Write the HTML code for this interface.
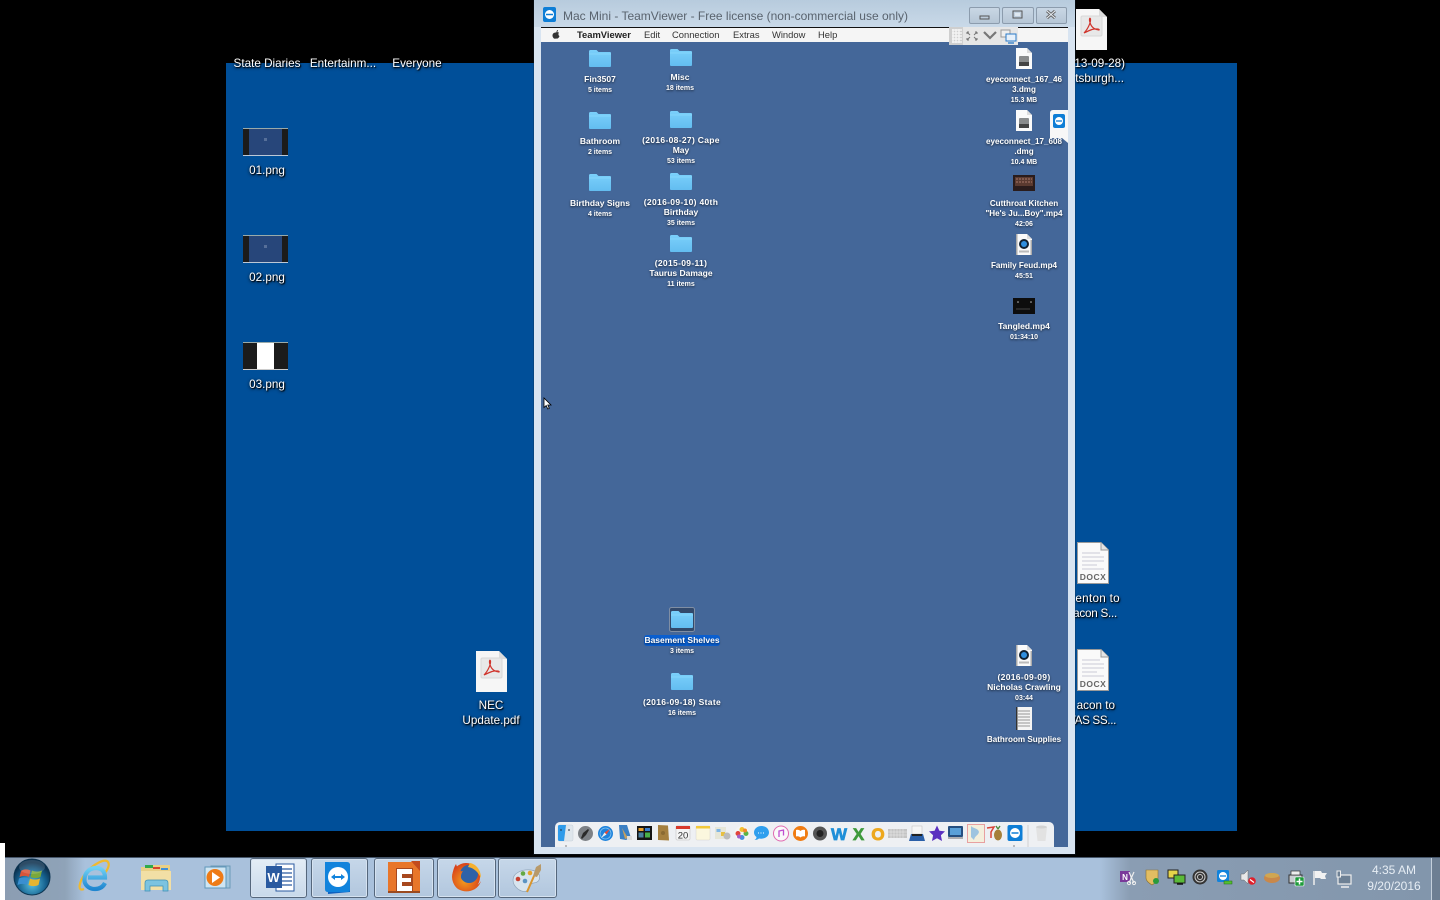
<!DOCTYPE html>
<html><head><meta charset="utf-8"><title>Mac Mini - TeamViewer</title>
<style>
html,body{margin:0;padding:0;width:1440px;height:900px;overflow:hidden;background:#000}
div{position:absolute}
svg{position:absolute;left:0;top:0;overflow:visible}
.d{font:11.7px/15px "Liberation Sans",sans-serif;color:#fff;text-shadow:1px 1px 1px #000,0 1px 3px #000;white-space:nowrap}
.c{width:120px;margin-left:-60px;text-align:center}
.m{width:100px;margin-left:-50px;text-align:center;font:bold 8.5px/10px "Liberation Sans",sans-serif;color:#fff;text-shadow:0 1px 2px rgba(0,0,0,.65);white-space:nowrap}
.s{font-size:7px}
.n{letter-spacing:.32px}
.e{font-size:8.1px}
.mn{font:9.4px/14px "Liberation Sans",sans-serif;color:#333;top:28px;white-space:nowrap}
.tb{top:858px;height:38px;background:linear-gradient(#c6d7e9,#b2c7de);border:1px solid #55677c;border-radius:3px;box-shadow:inset 0 0 0 1px #d5e2f0}
</style></head><body>
<svg width="0" height="0" style="position:absolute"><defs>
<linearGradient id="fg" x1="0" y1="0" x2="0" y2="1"><stop offset="0" stop-color="#7bd0fb"/><stop offset="1" stop-color="#63bdf0"/></linearGradient>
<linearGradient id="ieg" x1="0" y1="0" x2="0" y2="1"><stop offset="0" stop-color="#6fd0f4"/><stop offset="1" stop-color="#1f86d0"/></linearGradient>
<radialGradient id="orb" cx=".5" cy=".7" r=".6"><stop offset="0" stop-color="#58c0e0"/><stop offset=".65" stop-color="#15608e"/><stop offset="1" stop-color="#0b2f4d"/></radialGradient>
<radialGradient id="fx" cx=".45" cy=".6" r=".6"><stop offset="0" stop-color="#f6a21e"/><stop offset="1" stop-color="#d8401a"/></radialGradient>
<symbol id="folder" viewBox="0 0 22 17" width="22" height="17"><path d="M0 1.5Q0 0 1.5 0H7.5L9.5 2H21Q22 2 22 3V16Q22 17 21 17H1Q0 17 0 16Z" fill="url(#fg)"/><path d="M0 4H22" stroke="#8bd8fd" stroke-width=".7"/></symbol>
<symbol id="doc" viewBox="0 0 16 21" width="16" height="21"><path d="M0 0H11L16 5V21H0Z" fill="#fafafa"/><path d="M11 0V5H16" fill="#ddd"/></symbol>
<symbol id="dmg" viewBox="0 0 16 21" width="16" height="21"><use href="#doc"/><rect x="3" y="8" width="10" height="10" rx="1" fill="#8a8c8d"/><rect x="3" y="14" width="10" height="4" fill="#444"/></symbol>
<symbol id="mov" viewBox="0 0 16 21" width="16" height="21"><use href="#doc"/><path d="M0 0H1.500V21H0ZM14.500 6H16V21H14.500Z" fill="#aaa"/><circle cx="8" cy="10" r="5" fill="#123"/><circle cx="8" cy="10" r="3" fill="#2f8fe0"/><rect x="3" y="16.500" width="10" height="2" fill="#bbb"/></symbol>
<symbol id="docx" viewBox="0 0 32 42" width="32" height="42"><path d="M.5.500H24L31.500 8V41.500H.5Z" fill="#fafafa" stroke="#9a9a9a"/><path d="M24 .5V8H31.500" fill="#e4e4e4" stroke="#9a9a9a"/><path d="M5 11H23M5 15H27M5 19H27M5 23H20M5 27H27" stroke="#c9c9d6"/><text x="16" y="38" text-anchor="middle" font-family="Liberation Sans" font-weight="bold" font-size="8.500" letter-spacing=".5" fill="#666">DOCX</text></symbol>
<symbol id="pdf" viewBox="0 0 31 41" width="31" height="41"><path d="M0 0H23L31 8V41H0Z" fill="#f6f6f6"/><path d="M23 0V8H31" fill="#dcdcdc"/><rect x="5" y="7" width="21" height="20" rx="1.500" fill="#e8e8e8" stroke="#d8d8d8"/><path d="M8 24C12 20 15 13 14.500 10C14 8 12.500 10 14.500 15C16 19 20 21 23 21C24 20 20 19.500 16 20.500C13 21.500 10 23 8 24Z" fill="none" stroke="#d0342c" stroke-width="1.200"/></symbol>
</defs></svg>

<!-- Windows desktop -->
<div style="left:226px;top:63px;width:1011px;height:768px;background:#004f99"></div>
<div style="left:0;top:843px;width:5px;height:57px;background:#fff"></div>

<div class="d c" style="left:267px;top:56px">State Diaries</div>
<div class="d c" style="left:343px;top:56px">Entertainm...</div>
<div class="d c" style="left:417px;top:56px">Everyone</div>
<div class="d c" style="left:267px;top:163px">01.png</div>
<div class="d c" style="left:267px;top:270px">02.png</div>
<div class="d c" style="left:267px;top:377px">03.png</div>
<div class="d c" style="left:491px;top:698px">NEC<br>Update.pdf</div>
<div class="d" style="right:315px;top:56px">13-09-28)</div>
<div class="d" style="right:316px;top:71px">tsburgh...</div>
<div class="d" style="right:320px;top:591px;letter-spacing:.3px">enton to</div>
<div class="d" style="right:323px;top:606px;letter-spacing:-.25px">acon S...</div>
<div class="d" style="right:325px;top:698px">acon to</div>
<div class="d" style="right:324px;top:713px;letter-spacing:-.35px">VAS SS...</div>

<svg width="1440" height="900">
 <g>
  <rect x="243" y="128" width="45" height="28" fill="#1b1b1b"/><rect x="249" y="129" width="33" height="26" fill="#27467a"/><rect x="243" y="128" width="45" height="1" fill="#9aa"/><rect x="243" y="155" width="45" height="1" fill="#bcc8d6"/><rect x="264" y="138" width="3" height="3" fill="#566f99"/>
  <rect x="243" y="235" width="45" height="28" fill="#1b1b1b"/><rect x="249" y="236" width="33" height="26" fill="#27467a"/><rect x="243" y="235" width="45" height="1" fill="#9aa"/><rect x="243" y="262" width="45" height="1" fill="#bcc8d6"/><rect x="264" y="245" width="3" height="3" fill="#566f99"/>
  <rect x="243" y="342" width="45" height="28" fill="#1b1b1b"/><rect x="257" y="343" width="17" height="26" fill="#fff"/><rect x="243" y="342" width="45" height="1" fill="#9aa"/><rect x="243" y="369" width="45" height="1" fill="#ccc"/>
 </g>
 <use href="#pdf" x="476" y="651"/>
 <use href="#pdf" x="1076" y="9"/>
 <use href="#docx" x="1077" y="542"/>
 <use href="#docx" x="1077" y="649"/>
</svg>

<!-- TeamViewer window -->
<div style="left:534px;top:0;width:541px;height:854px;background:#d8e4f1;box-shadow:0 0 0 1px rgba(20,40,60,.25)"></div>
<div style="left:534px;top:0;width:541px;height:27px;background:linear-gradient(#b7cbdd,#c9d9e8)"></div>
<div style="left:563px;top:9px;font:12px/15px 'Liberation Sans',sans-serif;color:#59636e;white-space:nowrap">Mac Mini - TeamViewer - Free license (non-commercial use only)</div>
<div style="left:969px;top:7px;width:29px;height:15px;border:1px solid #8c9cad;border-radius:2px;background:linear-gradient(#c9d7e5,#b6c6d6)"></div>
<div style="left:1002px;top:7px;width:30px;height:15px;border:1px solid #8c9cad;border-radius:2px;background:linear-gradient(#c9d7e5,#b6c6d6)"></div>
<div style="left:1036px;top:7px;width:29px;height:15px;border:1px solid #8c9cad;border-radius:2px;background:linear-gradient(#c9d7e5,#b6c6d6)"></div>

<!-- Mac desktop -->
<div style="left:541px;top:27px;width:527px;height:820px;background:#446799"></div>
<div style="left:541px;top:27px;width:527px;height:1px;background:#111"></div>
<div style="left:541px;top:28px;width:527px;height:14px;background:#f5f5f5"></div>
<div class="mn" style="left:577px;font-weight:bold;color:#222">TeamViewer</div>
<div class="mn" style="left:644px">Edit</div>
<div class="mn" style="left:672px">Connection</div>
<div class="mn" style="left:733px">Extras</div>
<div class="mn" style="left:772px">Window</div>
<div class="mn" style="left:818px">Help</div>
<div style="left:949px;top:27px;width:69px;height:18px;background:#e6e6e6"></div>
<div style="left:949px;top:27px;width:14px;height:18px;background:#cfcfcf"></div>

<div class="m" style="left:600px;top:74px">Fin3507<br><span class="s">5 items</span></div>
<div class="m" style="left:680px;top:72px">Misc<br><span class="s">18 items</span></div>
<div class="m" style="left:600px;top:136px">Bathroom<br><span class="s">2 items</span></div>
<div class="m" style="left:681px;top:135px"><span class="n">(2016-08-27) Cape</span><br>May<br><span class="s">53 items</span></div>
<div class="m" style="left:600px;top:198px">Birthday Signs<br><span class="s">4 items</span></div>
<div class="m" style="left:681px;top:197px"><span class="n">(2016-09-10) 40th</span><br>Birthday<br><span class="s">35 items</span></div>
<div class="m" style="left:681px;top:258px"><span class="n">(2015-09-11)</span><br>Taurus Damage<br><span class="s">11 items</span></div>
<div style="left:644px;top:635px;width:76px;height:11px;background:#0a5fd0;border-radius:3px"></div>
<div class="m" style="left:682px;top:635px">Basement Shelves<br><span class="s">3 items</span></div>
<div class="m" style="left:682px;top:697px"><span class="n">(2016-09-18) State</span><br><span class="s">16 items</span></div>
<div class="m e" style="left:1024px;top:75px">eyeconnect_167_46<br>3.dmg<br><span class="s">15.3 MB</span></div>
<div class="m e" style="left:1024px;top:137px">eyeconnect_17_608<br>.dmg<br><span class="s">10.4 MB</span></div>
<div class="m e" style="left:1024px;top:199px">Cutthroat Kitchen<br>"He's Ju...Boy".mp4<br><span class="s">42:06</span></div>
<div class="m e" style="left:1024px;top:261px">Family Feud.mp4<br><span class="s">45:51</span></div>
<div class="m" style="left:1024px;top:321px">Tangled.mp4<br><span class="s">01:34:10</span></div>
<div class="m" style="left:1024px;top:672px"><span class="n">(2016-09-09)</span><br>Nicholas Crawling<br><span class="s">03:44</span></div>
<div class="m e" style="left:1024px;top:735px">Bathroom Supplies</div>

<!-- Dock -->
<div style="left:555px;top:822px;width:499px;height:25px;background:#eef0f3;border-radius:5px 5px 0 0"></div>

<svg width="1440" height="900" style="font-family:'Liberation Sans',sans-serif">
 <!-- window chrome icons -->
 <rect x="543" y="7" width="13" height="15" rx="2" fill="#0e7ed6"/><circle cx="549.500" cy="14.500" r="4.500" fill="#fff"/><path d="M546 14.500h7" stroke="#0e7ed6" stroke-width="1.500"/>
 <rect x="980" y="16" width="9" height="3" fill="none" stroke="#555"/>
 <rect x="1013" y="11" width="9" height="7" fill="none" stroke="#555"/><rect x="1015" y="13" width="5" height="3" fill="#dfe8f0"/>
 <path d="M1047 11l8 7m0-7l-8 7" stroke="#666" stroke-width="3"/><path d="M1047 11l8 7m0-7l-8 7" stroke="#e8eef4" stroke-width="1"/>
 <path d="M556 32.500c1-1 2 0 3 0-.8 1-.8 3 .5 3.500-.5 1.500-1.500 3-3 2.500-1 0-1.500.5-2.500 0-2-1.500-2.500-6 2-6zm.5-.5c0-1 .5-2 1.500-2 0 1-.5 2-1.500 2z" fill="#333"/>
 <!-- toolbar overlay -->
 <path d="M952 30h10M952 33h10M952 36h10M952 39h10M952 42h10M953 29v14M956 29v14M959 29v14" stroke="#f3f3f3" stroke-width="1.500"/>
 <path d="M967 32l3 3M977 32l-3 3M967 40l3-3M977 40l-3-3M967 32v2M967 32h2M977 32v2M977 32h-2M967 40v-2M967 40h2M977 40v-2M977 40h-2" fill="none" stroke="#777"/>
 <path d="M984 32l6 6 6-6" fill="none" stroke="#777" stroke-width="2.200"/>
 <rect x="1001" y="30" width="9" height="7" fill="#eee" stroke="#999"/><rect x="1006" y="34" width="10" height="7" fill="#e6f0fa" stroke="#2a7ac8"/><path d="M1008 43h6" stroke="#2a7ac8" stroke-width="1.300"/>
 <!-- TV side tab -->
 <path d="M1053 110H1068V143L1062 138H1050V113Q1050 110 1053 110Z" fill="#f7f7f7"/><rect x="1053" y="114" width="12" height="14" rx="2" fill="#0e7ed6"/><circle cx="1059" cy="121" r="4" fill="#fff"/><path d="M1056 121h6" stroke="#0e7ed6" stroke-width="1.300"/>
 <!-- Folders -->
 <use href="#folder" x="589" y="50"/><use href="#folder" x="670" y="49"/>
 <use href="#folder" x="589" y="112"/><use href="#folder" x="670" y="111"/>
 <use href="#folder" x="589" y="174"/><use href="#folder" x="670" y="173"/>
 <use href="#folder" x="670" y="235"/>
 <rect x="669.500" y="607.500" width="25" height="24" rx="2" fill="#2c3f5c" fill-opacity=".75" stroke="#7f8ea4"/>
 <use href="#folder" x="671" y="611"/>
 <use href="#folder" x="671" y="673"/>
 <!-- Files -->
 <use href="#dmg" x="1016" y="48"/><use href="#dmg" x="1016" y="110"/>
 <rect x="1013" y="175" width="22" height="16" fill="#2a1c1c"/><rect x="1015" y="177" width="18" height="9" fill="#5a3a30"/><path d="M1016 179h16M1016 182h16" stroke="#a8786a" stroke-dasharray="2 1"/>
 <use href="#mov" x="1016" y="234"/>
 <rect x="1013" y="298" width="22" height="16" fill="#0d0d0d"/><path d="M1016 309h14" stroke="#444"/><circle cx="1018" cy="302" r=".8" fill="#bbb"/><circle cx="1031" cy="302" r=".8" fill="#bbb"/>
 <use href="#mov" x="1016" y="645"/>
 <rect x="1016" y="707" width="16" height="23" fill="#f4f4f4"/><path d="M1018 711h12M1018 714h12M1018 717h12M1018 720h12M1018 723h12M1018 726h12" stroke="#777" stroke-width=".7"/><rect x="1016" y="707" width="1.500" height="23" fill="#333"/>
 <!-- cursor -->
 <path d="M544 398V407.500L546.200 405.500L547.800 409L549.300 408.300L547.800 405H551Z" fill="#fff" stroke="#000" stroke-width=".8"/>
 <!-- Dock icons -->
 <rect x="558" y="825" width="15" height="16" rx="1.500" fill="#dfe6ec" stroke="#c6d0d8" stroke-width=".5"/><path d="M558 826.500Q558 825 559.500 825H566L564 841H559.500Q558 841 558 839.500Z" fill="#2f9bea"/><path d="M561 829v2M569 829v2" stroke="#234"/><circle cx="566" cy="846" r=".6" fill="#333"/>
 <circle cx="585.500" cy="833.500" r="7.500" fill="#7d8186"/><path d="M581 838l2-5 5-4 1 1-3 5-4 4z" fill="#2a2a2a"/>
 <circle cx="605.500" cy="833.500" r="7.500" fill="#1f83dc"/><circle cx="605.500" cy="833.500" r="5.500" fill="none" stroke="#8cc8f2" stroke-width=".7"/><path d="M610 829l-3.500 5.500-2-2z" fill="#e84a35"/><path d="M601 838l5.500-3.500-2-2z" fill="#eee"/>
 <path d="M619 825h8l4 13-5 2-6-1z" fill="#3a7fc4"/><path d="M622 828l6 10-3 1z" fill="#c5a060"/><rect x="627" y="836" width="5" height="4" fill="#ddd"/>
 <rect x="637" y="826" width="15" height="14" fill="#151515"/><rect x="638.500" y="828" width="5" height="3" fill="#e8a02c"/><rect x="645" y="828" width="5" height="3" fill="#3a7fd0"/><rect x="638.500" y="832.500" width="5" height="5" fill="#4a7fa0"/><rect x="645" y="832.500" width="5" height="5" fill="#48b048"/>
 <path d="M658 825l10 .5 1 15-11-.5z" fill="#a5803f"/><circle cx="663" cy="833" r="2" fill="#8a6a32"/>
 <rect x="676" y="826" width="14" height="14" rx="1" fill="#f5f5f5" stroke="#bbb" stroke-width=".5"/><rect x="676" y="826" width="14" height="3" fill="#d83a2c"/><text x="683" y="838.500" text-anchor="middle" font-size="9.500" fill="#333">20</text>
 <rect x="696" y="826" width="14" height="14" rx="1" fill="#fbf7de" stroke="#ccc" stroke-width=".4"/><rect x="696" y="826" width="14" height="2.500" fill="#f2c83a"/>
 <rect x="715" y="827" width="11" height="12" fill="#e6e6d8"/><rect x="716.500" y="829" width="4" height="3" fill="#7fb6e6"/><rect x="721" y="832" width="4" height="4" fill="#e8c040"/><circle cx="727" cy="836" r="3.500" fill="#bbb"/>
 <circle cx="742" cy="833.500" r="7.500" fill="#f4f4f4"/><circle cx="742" cy="829.500" r="2.500" fill="#f2c030"/><circle cx="746" cy="833.500" r="2.500" fill="#58b548"/><circle cx="742" cy="837.500" r="2.500" fill="#4a8fe0"/><circle cx="738" cy="833.500" r="2.500" fill="#e2443a"/><circle cx="745" cy="830.500" r="2" fill="#f08a2c"/><circle cx="739" cy="836.500" r="2" fill="#a060c8"/>
 <path d="M761.500 826c-4.500 0-7.500 3-7.500 6.500 0 2 1 3.500 2.500 4.500 0 1.500-1 2.500-2 3 2 0 3.500-.5 4.500-1.500 5.500 1 10-2 10-6 0-3.500-3-6.500-7.500-6.500z" fill="#2f9fee"/><path d="M758 833h7" stroke="#fff" stroke-dasharray="1 1.500"/>
 <circle cx="781" cy="833.500" r="7.500" fill="#fafafa" stroke="#e06ab0"/><path d="M779 837v-6l4.500-1v5.500" fill="none" stroke="#c04fd0" stroke-width="1.300"/>
 <circle cx="800.500" cy="833.500" r="7.500" fill="#f07c12"/><path d="M796 830c2-.5 3.500 0 4.500 1 1-1 2.500-1.500 4.500-1v6.500c-2-.5-3.500 0-4.500 1-1-1-2.500-1.500-4.500-1z" fill="#fff"/>
 <circle cx="820" cy="833.500" r="7" fill="#555"/><circle cx="820" cy="833.500" r="3.500" fill="#222"/>
 <text x="839" y="840" text-anchor="middle" font-size="17" font-weight="bold" fill="#1f8fd8" stroke="#1f8fd8" stroke-width=".7">W</text>
 <text x="858.500" y="840" text-anchor="middle" font-size="17" font-weight="bold" fill="#3f9a3c" stroke="#3f9a3c" stroke-width=".7">X</text>
 <text x="878" y="840" text-anchor="middle" font-size="17" font-weight="bold" fill="#eda81e" stroke="#eda81e" stroke-width=".9">O</text>
 <rect x="888" y="829" width="19" height="9" fill="#c4c4c4"/><path d="M888 832h19M888 835h19M891 829v9M894 829v9M897 829v9M900 829v9M903 829v9" stroke="#eee" stroke-width=".5"/>
 <rect x="912" y="826" width="10" height="8" fill="#f6f6f6" stroke="#bbb" stroke-width=".5"/><path d="M909 841l2-7h12l2 7z" fill="#2a5fa8"/><rect x="912" y="834" width="10" height="2" fill="#222"/>
 <path d="M937 825.500l2.400 5.200 5.600.7-4.100 3.900 1.100 5.700-5-2.800-5 2.800 1.100-5.700-4.100-3.900 5.600-.7z" fill="#5a2fc0"/>
 <rect x="948" y="826" width="15" height="11" rx="1" fill="#254f80"/><rect x="950" y="828" width="11" height="7" fill="#5aa0d8"/><path d="M948 838h15" stroke="#999" stroke-width="1.500"/>
 <rect x="967.500" y="824.500" width="17" height="18" fill="#f4efdc" stroke="#e8a0a0"/><path d="M971 826c3 3 7 2 8 6-1 4-4 3-5 8l-3-3z" fill="#9ec4e0"/>
 <path d="M987 828l7-1-3 5v6" fill="none" stroke="#d8453a" stroke-width="1.500"/><ellipse cx="998" cy="835" rx="4" ry="5.500" fill="#a5803a"/><path d="M998 829l-2-3M998 829l2-3" stroke="#4a8a3a" stroke-width="1.300"/>
 <rect x="1007.500" y="825" width="15" height="16" rx="2" fill="#0e7ed6"/><circle cx="1015" cy="833" r="5" fill="#fff"/><path d="M1011.500 833h7" stroke="#0e7ed6" stroke-width="1.500"/><circle cx="1014" cy="846" r=".6" fill="#333"/>
 <path d="M1028 825v22" stroke="#d0d0d0"/>
 <path d="M1036 827h11l-1.500 14h-8z" fill="#e2e2e2"/><ellipse cx="1041.500" cy="827" rx="5.500" ry="1.500" fill="#d2d2d2"/>
</svg>

<!-- Taskbar -->
<div style="left:5px;top:857px;width:1435px;height:43px;background:linear-gradient(90deg,#8b9db2 0,#8fa3b8 60px,#a9c1dc 80px,#a9c1dc 1095px,#8a9db3 1125px,#8296ac 1430px);border-top:1px solid #46566a;box-sizing:border-box"></div>
<div class="tb" style="left:250px;width:55px;background:linear-gradient(#e4edf6,#c8d9ea)"></div>
<div class="tb" style="left:311px;width:55px"></div>
<div class="tb" style="left:374px;width:58px"></div>
<div class="tb" style="left:437px;width:57px"></div>
<div class="tb" style="left:498px;width:57px"></div>
<div style="left:1431px;top:858px;width:9px;height:42px;background:#6d7f93;border-left:1px solid #c4d0dc;box-sizing:border-box"></div>
<div style="left:1354px;top:862px;width:80px;text-align:center;font:12px/16px 'Liberation Sans',sans-serif;color:#e6edf4">4:35 AM<br>9/20/2016</div>

<svg width="1440" height="900" style="font-family:'Liberation Sans',sans-serif">
 <!-- Start -->
 <circle cx="32" cy="877" r="18" fill="url(#orb)" stroke="#0d3552"/>
 <path d="M21 871c3-2 6-2 9.500-.5l-1.500 6.500c-3-1.500-6-1.500-9.500 0z" fill="#d8553a"/>
 <path d="M32 870.500c3.500 1.500 6.500 1.500 10 0l-1.500 6.500c-3.500 1.500-6.500 1.500-10 0z" fill="#7ba83a"/>
 <path d="M19 878.500c3.500-1.500 6.500-1.500 9.500 0L27 885c-3-1.500-6-1.500-9.500 0z" fill="#3a8fd0"/>
 <path d="M30 878.500c3.500 1.500 6.500 1.500 10 0l-1.500 6.500c-3.500 1.500-6.500 1.500-10 0z" fill="#e8b52f"/>
 <ellipse cx="32" cy="867" rx="13" ry="7" fill="#fff" fill-opacity=".14"/>
 <!-- IE -->
 <path d="M84 889C77 892 79 882 85 874C93 864 105 858 108 862C110 865 108 869 105 873" fill="none" stroke="#f0b92c" stroke-width="2.200"/>
 <path d="M88 877.500H105C105 871 101 868 96 868C90 868 85 872 84.500 879C84 885 89 889 95 889C100 889 103 887 105 883" fill="none" stroke="url(#ieg)" stroke-width="4.200"/>
 <!-- Explorer -->
 <path d="M141 867h6l2-2h21v25h-29z" fill="#e9cf85"/><rect x="145" y="865" width="8" height="3" fill="#2faa4a"/><rect x="153" y="867" width="7" height="2" fill="#d8442e"/><rect x="161" y="868" width="7" height="2" fill="#3f8fd8"/>
 <path d="M141 871h30v19h-30z" fill="#f2dfa5"/><path d="M145 891v-8c0-2 1-3 3-3h17c2 0 3 1 3 3v8h-5v-5h-13v5z" fill="#7cc3e0" stroke="#3d8fb2" stroke-width=".7"/>
 <!-- WMP -->
 <path d="M208 866h19v22h-19z" fill="#9fc4dc" stroke="#6c9ab8" transform="translate(3 0)"/><rect x="205" y="867" width="21" height="21" fill="#cfe5f2" stroke="#5f97ba"/><circle cx="215" cy="877.500" r="8.500" fill="#ee7b16"/><path d="M212 872v11l8-5.500z" fill="#fff"/>
 <!-- Word -->
 <rect x="276" y="864" width="18" height="27" fill="#fff" stroke="#2a5aa0"/><path d="M282 869h10M282 873h10M282 877h10M282 881h10M282 885h10" stroke="#2a5aa0" stroke-width="1.300"/>
 <rect x="266" y="866" width="16" height="22" fill="#2a5aa0"/><text x="273.500" y="882" text-anchor="middle" font-size="13" font-weight="bold" fill="#fff">W</text>
 <!-- TeamViewer -->
 <path d="M326 862l24 2v28l-22 2z" fill="#0e62c0"/><path d="M325 862h22q3 0 3 3v24q0 3-3 3h-19q-3 0-3-3z" fill="#1183dc"/><circle cx="338" cy="877" r="10" fill="#fff"/><path d="M331 877l4-3v2h6v-2l4 3-4 3v-2h-6v2z" fill="#1183dc"/>
 <!-- Estimator E -->
 <rect x="388" y="862" width="32" height="31" fill="#e8762a"/><path d="M411 861h9v10z" fill="#c24a1e"/><rect x="396" y="868" width="17" height="23" fill="#a8481e"/>
 <path d="M397 869h15v5h-10v4h9v4h-9v4h10v5h-15z" fill="#fff"/><rect x="388" y="891" width="32" height="2" fill="#9a4a20"/>
 <!-- Firefox -->
 <circle cx="466" cy="877" r="14" fill="url(#fx)"/><circle cx="469" cy="874" r="9" fill="#2f62a8"/>
 <path d="M456 864C451 872 451 884 458 889C466 894 478 891 481 881C478 887 470 888 465 884C460 880 460 875 463 871C460 872 458 870 456 864Z" fill="url(#fx)"/>
 <path d="M470 863C476 864 481 870 481 878C478 872 474 868 468 867Z" fill="#f6b02e"/>
 <!-- Paint -->
 <path d="M513 880c0-7 9-11 18-10 7 1 10 5 8 10-2 4-6 2-8 4-2 3-1 5-4 7-6 2-14-4-14-11z" fill="#d8e4ee" stroke="#8ea3b8" stroke-width=".7"/>
 <circle cx="518" cy="879" r="2.300" fill="#c8402f"/><circle cx="523" cy="873.500" r="2.300" fill="#64a843"/><circle cx="530" cy="873" r="2.300" fill="#e6a42c"/><circle cx="525" cy="881" r="2.300" fill="#5b94c4"/>
 <path d="M527 892l7-16" stroke="#d8952e" stroke-width="2"/><path d="M533 876l3-9 5-3 0 6-4 7z" fill="#b89a6a"/>
 <!-- Tray -->
 <rect x="1120" y="871" width="10" height="11" fill="#7a3a9a"/><text x="1125" y="880" text-anchor="middle" font-size="8" font-weight="bold" fill="#fff">N</text><path d="M1129 872l5 11M1134 872l-5 11" stroke="#eee" stroke-width="1.200"/><circle cx="1129" cy="883" r="1.600" fill="none" stroke="#eee"/><circle cx="1134" cy="883" r="1.600" fill="none" stroke="#eee"/>
 <path d="M1146 870h12v8c0 3-3 5-6 7-3-2-6-4-6-7z" fill="#e2bd62" stroke="#8a7030" stroke-width=".6"/><circle cx="1156" cy="881" r="3" fill="#2a9a3a"/>
 <rect x="1168" y="870" width="10" height="8" fill="#e6d44a" stroke="#222"/><rect x="1174" y="875" width="11" height="8" fill="#5aba38" stroke="#222"/><path d="M1177 884h6" stroke="#111" stroke-width="1.500"/>
 <circle cx="1200" cy="877" r="7.500" fill="#333"/><circle cx="1200" cy="877" r="5" fill="none" stroke="#ccc"/><circle cx="1200" cy="877" r="2.500" fill="none" stroke="#ccc"/>
 <rect x="1217" y="870" width="12" height="12" rx="1.500" fill="#1183dc"/><circle cx="1223" cy="876" r="4" fill="#fff"/><path d="M1220 876h6" stroke="#1183dc" stroke-width="1.300"/><rect x="1224" y="881" width="8" height="3" fill="#55c030" stroke="#226a12" stroke-width=".5"/>
 <path d="M1241 874h3l4-4v14l-4-4h-3z" fill="#e8e8e8" stroke="#666" stroke-width=".5"/><circle cx="1252" cy="881" r="3.800" fill="#e01f2a"/><path d="M1250 879.500l4 3" stroke="#fff" stroke-width="1.200"/>
 <ellipse cx="1272" cy="878" rx="8" ry="5" fill="#c9884a"/><ellipse cx="1272" cy="875.500" rx="7" ry="2.500" fill="#d0a652"/>
 <rect x="1289" y="875" width="13" height="8" fill="#c9ced2" stroke="#333"/><rect x="1291" y="871" width="9" height="4" fill="#eee" stroke="#333" stroke-width=".7"/><rect x="1295" y="877" width="9" height="9" rx="1" fill="#1e9a3a" stroke="#fff" stroke-width=".6"/><path d="M1299.500 878.500v6M1296.500 881.500h6" stroke="#fff" stroke-width="1.500"/>
 <path d="M1314 871v14" stroke="#eee" stroke-width="1.500"/><path d="M1315 871h6l1 2h5l-2 3 1 3h-5l-1-1h-5z" fill="#f2f2f2"/>
 <rect x="1338" y="875" width="13" height="9" fill="#6e8195" stroke="#eee" stroke-width="1.200"/><path d="M1341 887h8" stroke="#eee" stroke-width="1.500"/><rect x="1337" y="871" width="3.500" height="6" fill="#6e8195" stroke="#eee"/>
</svg>
</body></html>
